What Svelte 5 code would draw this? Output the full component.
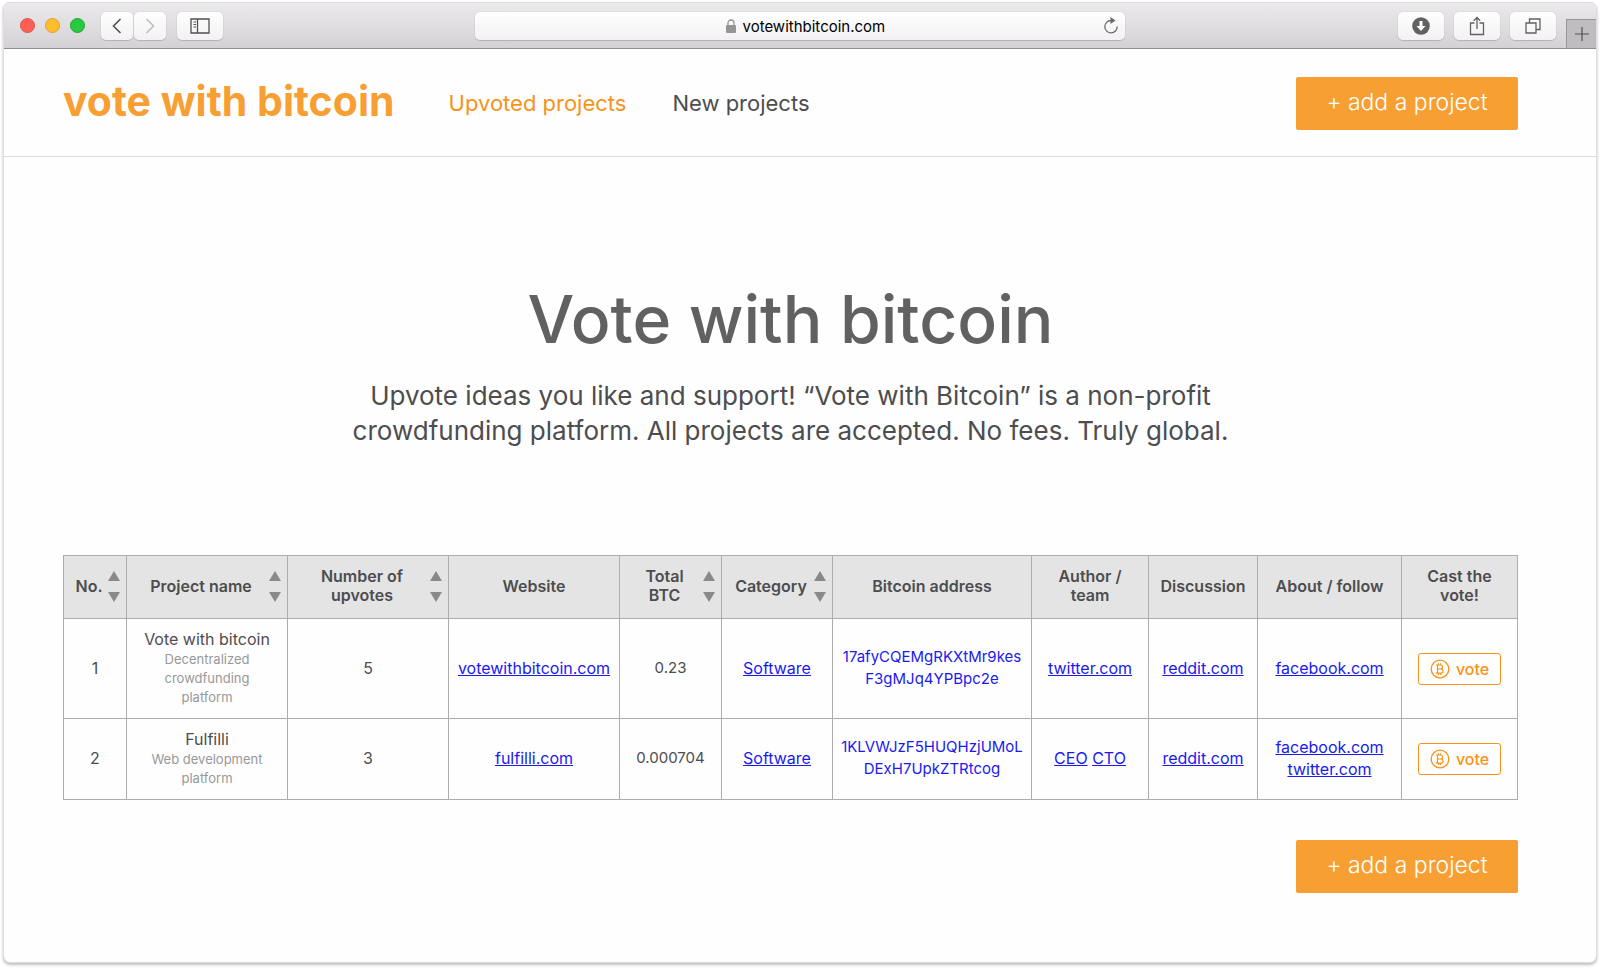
<script>
  const columns = [
    { label: 'No.', lines: ['No.'], width: 63, sortable: true },
    { label: 'Project name', lines: ['Project name'], width: 161, sortable: true },
    { label: 'Number of upvotes', lines: ['Number of', 'upvotes'], width: 161, sortable: true },
    { label: 'Website', lines: ['Website'], width: 171 },
    { label: 'Total BTC', lines: ['Total', 'BTC'], width: 102, sortable: true },
    { label: 'Category', lines: ['Category'], width: 111, sortable: true },
    { label: 'Bitcoin address', lines: ['Bitcoin address'], width: 199 },
    { label: 'Author / team', lines: ['Author /', 'team'], width: 117 },
    { label: 'Discussion', lines: ['Discussion'], width: 109 },
    { label: 'About / follow', lines: ['About / follow'], width: 144 },
    { label: 'Cast the vote!', lines: ['Cast the', 'vote!'], width: 116 }
  ];
  const total = columns.reduce((sum, c) => sum + c.width, 0);

  const projects = [
    {
      name: 'Vote with bitcoin',
      about: 'Decentralized crowdfunding platform',
      upvotes: 5,
      website: 'votewithbitcoin.com',
      btc: '0.23',
      category: 'Software',
      address: ['17afyCQEMgRKXtMr9kes', 'F3gMJq4YPBpc2e'],
      team: ['twitter.com'],
      discussion: 'reddit.com',
      follow: ['facebook.com']
    },
    {
      name: 'Fulfilli',
      about: 'Web development platform',
      upvotes: 3,
      website: 'fulfilli.com',
      btc: '0.000704',
      category: 'Software',
      address: ['1KLVWJzF5HUQHzjUMoL', 'DExH7UpkZTRtcog'],
      team: ['CEO', 'CTO'],
      discussion: 'reddit.com',
      follow: ['facebook.com', 'twitter.com']
    }
  ];
</script>

<div class="window">
  <div class="toolbar">
    <div class="tools">
      <div class="lights">
        <button class="light red" aria-label="Close"></button>
        <button class="light yellow" aria-label="Minimize"></button>
        <button class="light green" aria-label="Zoom"></button>
      </div>
      <div class="history">
        <button class="tool narrow" aria-label="Back">
          <svg width="10" height="16" viewBox="0 0 10 16"><path d="M8.5 1 1.5 8l7 7" fill="none" stroke="#505050" stroke-width="1.6" /></svg>
        </button>
        <button class="tool narrow" aria-label="Forward">
          <svg width="10" height="16" viewBox="0 0 10 16"><path d="m1.500 1 7 7-7 7" fill="none" stroke="#b9b9b9" stroke-width="1.4" /></svg>
        </button>
      </div>
      <button class="tool" aria-label="Sidebar">
        <svg width="20" height="16" viewBox="0 0 20 16">
          <path d="M1 1h18v14H1zM7.500 1v14" fill="none" stroke="#505050" stroke-width="1.300" />
          <path d="M3.500 4h2.500M3.500 6.500h2.500M3.500 9h2.500" stroke="#505050" />
        </svg>
      </button>
    </div>
    <div class="address">
      <svg width="10" height="14" viewBox="0 0 10 14">
        <path d="M2 6.500V4a3 3 0 0 1 6 0v2.500" fill="none" stroke="#959595" stroke-width="1.300" />
        <rect x="0" y="6" width="10" height="8" rx="1" fill="#959595" />
      </svg>
      <input type="text" aria-label="Address" value="votewithbitcoin.com" />
      <button class="reload" aria-label="Reload">
        <svg width="16" height="18" viewBox="0 0 16 18">
          <path d="M9 3.500H8A6.200 6.200 0 1 0 14.200 9.500" fill="none" stroke="#6b6b6b" stroke-width="1.300" />
          <path d="M7.500 0 12.500 3.500 7.500 7z" fill="#6b6b6b" />
        </svg>
      </button>
    </div>
    <div class="tools end">
      <button class="tool" aria-label="Downloads">
        <svg width="18" height="18" viewBox="0 0 18 18">
          <circle cx="9" cy="9" r="8.800" fill="#616161" />
          <path d="M7.500 4h3v5h3L9 14 4.500 9h3z" fill="#fff" />
        </svg>
      </button>
      <button class="tool" aria-label="Share">
        <svg width="16" height="20" viewBox="0 0 16 20">
          <path d="M5.500 7h-4v11.500h13V7h-4M8 13V1.500M4.800 4.700 8 1.500l3.200 3.200" fill="none" stroke="#616161" stroke-width="1.300" />
        </svg>
      </button>
      <button class="tool" aria-label="Tabs">
        <svg width="16" height="16" viewBox="0 0 16 16">
          <path d="M1 5h10v10H1zM4.500 5V1H15v10.500h-4" fill="none" stroke="#616161" stroke-width="1.300" />
        </svg>
      </button>
      <button class="new-tab" aria-label="New tab">
        <svg width="14" height="14" viewBox="0 0 14 14"><path d="M7 0v14M0 7h14" stroke="#505050" stroke-width="1.200" /></svg>
      </button>
    </div>
  </div>

  <header>
    <a class="logo" href="#home">vote with bitcoin</a>
    <nav>
      <a class="current" href="#upvoted">Upvoted projects</a>
      <a href="#new">New projects</a>
    </nav>
    <button class="add">+ add a project</button>
  </header>

  <main>
    <h1>Vote with bitcoin</h1>
    <p class="intro">
      Upvote ideas you like and support! “Vote with Bitcoin” is a non-profit<br />
      crowdfunding platform. All projects are accepted. No fees. Truly global.
    </p>

    <table>
      <colgroup>
        {#each columns as column}
          <col style:width="{(column.width / total) * 100}%" />
        {/each}
      </colgroup>
      <thead>
        <tr>
          {#each columns as column}
            <th scope="col">
              <div class="heading">
                <span>{column.lines[0]}{#if column.lines[1]}<br />{column.lines[1]}{/if}</span>
                {#if column.sortable}
                  <div class="sort">
                    <button aria-label="Sort {column.label} ascending">
                      <svg width="12" height="10" viewBox="0 0 12 10"><path d="M6 0l6 10H0z" fill="#898989" /></svg>
                    </button>
                    <button aria-label="Sort {column.label} descending">
                      <svg width="12" height="10" viewBox="0 0 12 10"><path d="M0 0h12L6 10z" fill="#898989" /></svg>
                    </button>
                  </div>
                {/if}
              </div>
            </th>
          {/each}
        </tr>
      </thead>
      <tbody>
        {#each projects as project, i}
          <tr>
            <td>{i + 1}</td>
            <td class="project">
              {project.name}
              <div class="about">{project.about}</div>
            </td>
            <td>{project.upvotes}</td>
            <td><a href="#website">{project.website}</a></td>
            <td class="amount">{project.btc}</td>
            <td><a href="#category">{project.category}</a></td>
            <td class="wallet"><a href="#wallet">{project.address[0]}<br />{project.address[1]}</a></td>
            <td>{#each project.team as member}<a href="#team">{member}</a>{' '}{/each}</td>
            <td><a href="#discussion">{project.discussion}</a></td>
            <td>{#each project.follow as site}<a href="#follow">{site}</a>{' '}{/each}</td>
            <td class="cast">
              <button class="vote">
                <svg width="20" height="20" viewBox="0 0 20 20" fill="none" stroke="#f7931a">
                  <circle cx="10" cy="10" r="8.800" stroke-width="1.300" />
                  <path d="M5.800 6h4.700a2 2 0 0 1 0 4H7.500h3.500a2.100 2.100 0 0 1 0 4.200H5.800M7.500 6v8.200M8.500 4.300V6M10.700 4.300V6M8.500 14.200v1.700M10.700 14.200v1.700" stroke-width="1.200" />
                </svg>
                vote
              </button>
            </td>
          </tr>
        {/each}
      </tbody>
    </table>

    <div class="actions">
      <button class="add">+ add a project</button>
    </div>
  </main>
</div>

<style>
  :global(body) {
    margin: 0;
    background: #fff;
  }

  .window {
    margin: 3px 4px 7px;
    overflow: hidden;
    border-radius: 6px;
    background: #fefefe;
    box-shadow: 0 0 0 1px #dcdcdc, 0 2px 3px 1px rgba(0, 0, 0, 0.25);
    color: #4d4d4f;
    font-family: Inter, sans-serif;
  }

  button {
    display: flex;
    align-items: center;
    justify-content: center;
    padding: 0;
    border: 0;
    background: none;
    font-family: inherit;
    cursor: pointer;
  }

  svg {
    display: block;
    flex: none;
  }

  .toolbar {
    display: grid;
    grid-template-columns: 1fr minmax(0, 650px) 1fr;
    align-items: center;
    height: 45px;
    border-bottom: 1px solid #8f8d90;
    background: linear-gradient(#ebe9eb, #d4d2d5);
  }

  .tools {
    display: flex;
    align-items: center;
    height: 45px;
    padding-left: 16px;
  }

  .lights {
    display: flex;
    gap: 10px;
    margin-right: 16px;
  }

  .light {
    width: 15px;
    height: 15px;
    border-radius: 50%;
  }

  .red {
    border: 1px solid #e2504a;
    background: #ff5f57;
  }

  .yellow {
    border: 1px solid #e0a028;
    background: #ffbd2e;
  }

  .green {
    border: 1px solid #1aab29;
    background: #28c940;
  }

  .history {
    display: flex;
    gap: 1px;
    margin-right: 11px;
  }

  .tool {
    width: 46px;
    height: 28px;
    border-radius: 5px;
    background: linear-gradient(#fefefe, #f2f2f2);
    box-shadow: 0 1px 1px #b4b2b5, 0 0 1px #b4b2b5;
  }

  .narrow {
    width: 32px;
  }

  .address {
    position: relative;
    display: flex;
    align-items: center;
    justify-content: center;
    gap: 7px;
    height: 28px;
    padding-left: 10px;
    border-radius: 5px;
    background: linear-gradient(#fefefe, #f2f2f2);
    box-shadow: 0 1px 1px #b4b2b5, 0 0 1px #b4b2b5;
  }

  .address input {
    width: 142px;
    padding: 2px 0 0;
    border: 0;
    outline: 0;
    background: none;
    color: #000;
    font: 15px/20px Inter, sans-serif;
  }

  .reload {
    position: absolute;
    right: 6px;
    top: 5px;
  }

  .end {
    justify-content: flex-end;
    gap: 10px;
    padding: 0;
  }

  .new-tab {
    align-self: flex-end;
    width: 30px;
    height: 29px;
    border: solid #98969a;
    border-width: 1px 0 0 1px;
    background: #bfbdc0;
  }

  header {
    display: flex;
    align-items: center;
    padding: 28px 78px 26px 59px;
    border-bottom: 1px solid #dcdcdc;
  }

  a {
    text-decoration: none;
  }

  .logo {
    padding-bottom: 6px;
    color: #f89f34;
    font-size: 41px;
    font-weight: 700;
    line-height: 46px;
  }

  nav {
    display: flex;
    gap: 46px;
    margin: 0 auto 0 54px;
    padding-bottom: 2px;
    font-size: 22px;
    line-height: 30px;
  }

  nav a {
    color: #4d4d4f;
  }

  nav .current {
    color: #f7931a;
  }

  .add {
    width: 222px;
    height: 53px;
    padding-bottom: 4px;
    border-radius: 2px;
    background: #f89f34;
    color: #fff;
    font-size: 23px;
    font-weight: 300;
  }

  main {
    padding: 122px 78px 69px 59px;
  }

  h1 {
    margin: 0;
    color: #616162;
    font-size: 66px;
    font-weight: 500;
    line-height: 80px;
    text-align: center;
  }

  .intro {
    margin: 19px 0 107px;
    font-size: 26px;
    line-height: 35px;
    text-align: center;
  }

  table {
    width: 100%;
    border-collapse: collapse;
    table-layout: fixed;
    font-size: 16px;
    text-align: center;
  }

  th,
  td {
    padding: 0 0 2px;
    border: 1px solid #adadad;
  }

  th {
    height: 60px;
    background: #e4e4e4;
    font-weight: 600;
    line-height: 19px;
  }

  .heading {
    display: flex;
    align-items: center;
    padding: 0 6px;
  }

  .heading span {
    flex: 1;
    white-space: nowrap;
  }

  .sort {
    display: grid;
    gap: 11px;
  }

  td {
    line-height: 22px;
  }

  td a {
    color: #1a1aee;
    text-decoration: underline;
  }

  .amount,
  .wallet {
    font-size: 15px;
  }

  .wallet a {
    text-decoration: none;
  }

  .project {
    padding: 9px 8px 11px;
  }

  .about {
    padding: 0 12px;
    color: #98989a;
    font-size: 13px;
    line-height: 19px;
  }

  .cast {
    padding: 0;
  }

  .vote {
    gap: 6px;
    width: 83px;
    height: 32px;
    margin: 0 auto;
    border: 1px solid #f7931a;
    border-radius: 3px;
    color: #f7931a;
    font-size: 16px;
    font-weight: 500;
  }

  .actions {
    display: flex;
    justify-content: flex-end;
    margin-top: 40px;
  }
</style>
